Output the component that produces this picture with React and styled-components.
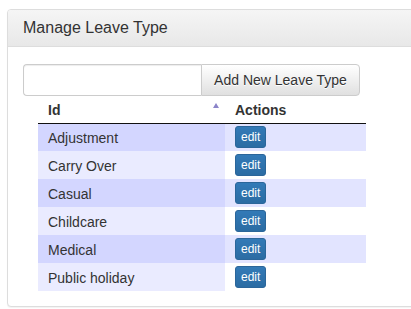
import React from "react";
import styled, { createGlobalStyle } from "styled-components";

const GlobalStyle = createGlobalStyle`
	html, body {
		margin: 0;
		background: #fff;
		font-family: "Liberation Sans", Arial, sans-serif;
		color: #333;
		overflow: hidden;
	}
`;

const types = ["Adjustment", "Carry Over", "Casual", "Childcare", "Medical", "Public holiday"];

function App() {
	return (
		<Page>
			<GlobalStyle />
			<Panel>
				<Heading>Manage Leave Type</Heading>
				<Body>
					<InputGroup>
						<TextInput type="text" />
						<AddButton>Add New Leave Type</AddButton>
					</InputGroup>
					<Table>
						<thead>
							<tr>
								<HeadCell $sorted>
									Id
									<SortArrow />
								</HeadCell>
								<HeadCell>Actions</HeadCell>
							</tr>
						</thead>
						<tbody>
							{types.map((name, i) => (
								<Row key={name} $odd={i % 2 === 0}>
									<IdCell>{name}</IdCell>
									<ActionCell>
										<EditButton>edit</EditButton>
									</ActionCell>
								</Row>
							))}
						</tbody>
					</Table>
				</Body>
			</Panel>
		</Page>
	);
}

export default App;

const Page = styled.div`
	width: 100%;
	height: 309px;
	box-sizing: border-box;
	padding: 9px 0 0 7px;
	overflow: hidden;
`;

const Panel = styled.div`
	width: 430px;
	height: 298px;
	box-sizing: border-box;
	border: 1px solid #ddd;
	border-radius: 4px;
	background: #fff;
	box-shadow: 0 1px 1px rgba(0, 0, 0, 0.05);
`;

const Heading = styled.div`
	height: 37px;
	box-sizing: border-box;
	padding: 9px 15px;
	font-size: 16px;
	color: #333;
	background-image: linear-gradient(to bottom, #f5f5f5 0%, #e8e8e8 100%);
	border-bottom: 1px solid #ddd;
	border-radius: 3px 3px 0 0;
`;

const Body = styled.div`
	padding: 17px 15px 15px;
`;

const InputGroup = styled.div`
	display: flex;
	width: 337px;
	height: 32px;
`;

const TextInput = styled.input`
	width: 178px;
	box-sizing: border-box;
	border: 1px solid #ccc;
	border-right: none;
	border-radius: 4px 0 0 4px;
	box-shadow: inset 0 1px 1px rgba(0, 0, 0, 0.075);
	padding: 6px 12px;
	font-size: 14px;
	outline: none;
`;

const AddButton = styled.button`
	flex: 1;
	border: 1px solid #ccc;
	border-radius: 0 4px 4px 0;
	background-image: linear-gradient(to bottom, #fff 0%, #e0e0e0 100%);
	font-family: "Liberation Sans", Arial, sans-serif;
	font-size: 14px;
	color: #333;
	padding: 6px 12px;
	text-shadow: 0 1px 0 #fff;
`;

const Table = styled.table`
	margin-left: 15px;
	width: 328px;
	border-collapse: collapse;
	font-size: 14px;
`;

const HeadCell = styled.th`
	position: relative;
	height: 27px;
	padding: 1px 10px 0;
	box-sizing: border-box;
	text-align: left;
	font-weight: bold;
	color: #333;
	border-bottom: 1px solid #111;
	width: ${(p) => (p.$sorted ? "187px" : "auto")};
`;

const SortArrow = styled.span`
	position: absolute;
	right: 6px;
	top: 7px;
	width: 0;
	height: 0;
	border-left: 3.5px solid transparent;
	border-right: 3.5px solid transparent;
	border-bottom: 5px solid #8b84c9;
`;

const Row = styled.tr`
	height: 28px;
	td:first-child {
		background: ${(p) => (p.$odd ? "#d3d6ff" : "#eaebff")};
	}
	td:last-child {
		background: ${(p) => (p.$odd ? "#e2e4ff" : "#fff")};
	}
`;

const IdCell = styled.td`
	padding: 1px 10px 0;
	color: #333;
`;

const ActionCell = styled.td`
	padding: 0 10px;
`;

const EditButton = styled.button`
	display: block;
	height: 22px;
	padding: 0 5px;
	border: 1px solid #2b669a;
	border-radius: 3px;
	background-image: linear-gradient(to bottom, #337ab7 0%, #2b6ca3 100%);
	color: #fff;
	font-family: "Liberation Sans", Arial, sans-serif;
	font-size: 12px;
	line-height: 20px;
`;
